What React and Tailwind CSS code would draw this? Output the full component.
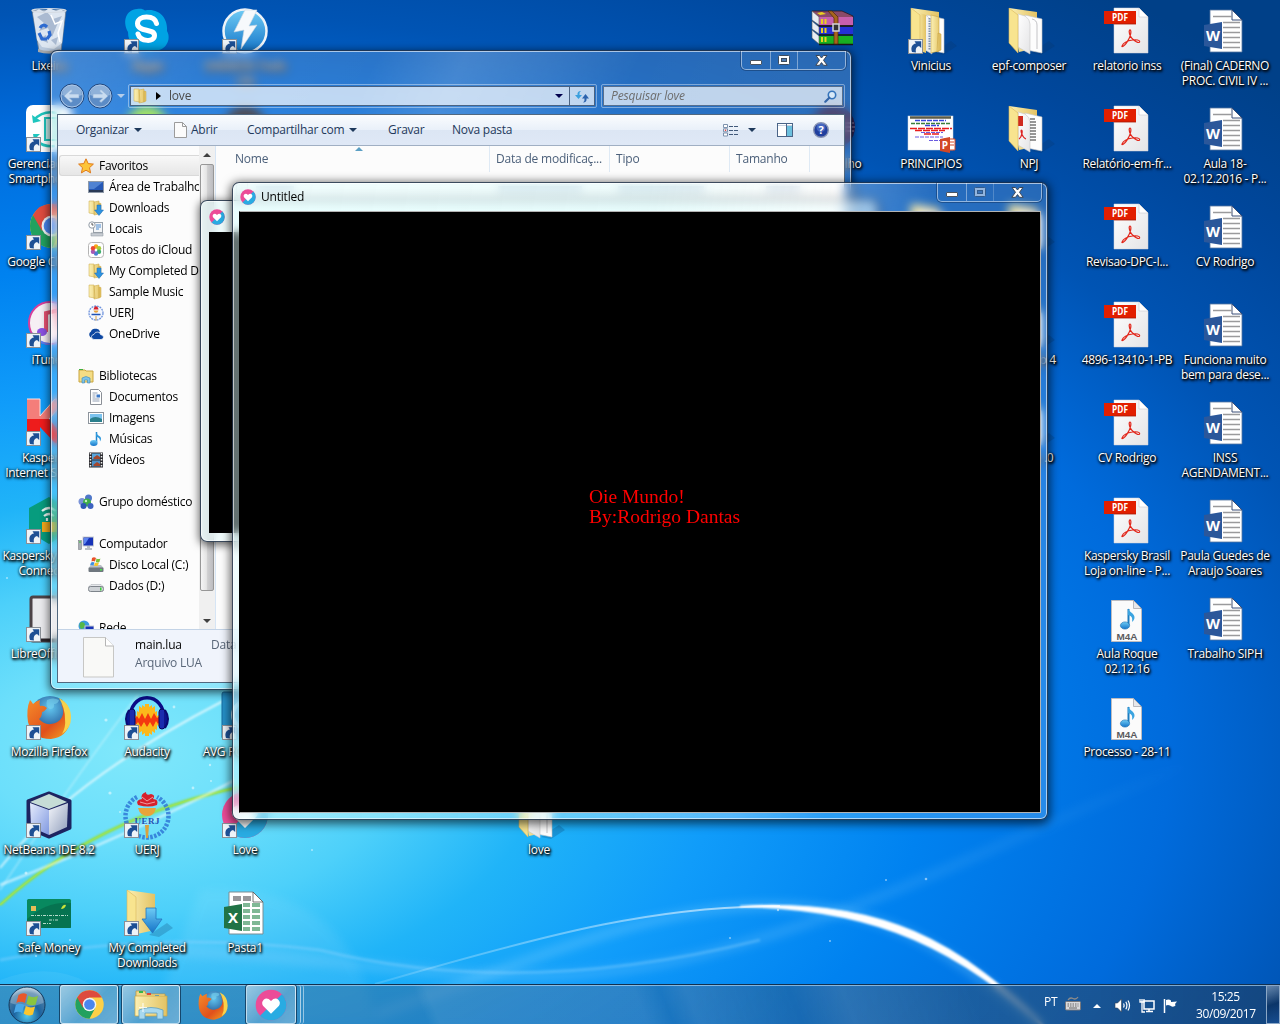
import React from "react";

const UI = "font-['Open_Sans','Noto_Sans',sans-serif]";

/* ---------- shared drawings ---------- */

function Arrow() {
  return (
    <g>
      <rect x="1.5" y="32.5" width="14" height="14" fill="#eef3f8" stroke="#8a8f96" />
      <path d="M5 45c-1.6-4.6.2-7.800 4-8.400L7.500 34.300h6.700v6.700l-2.200-2c-2.600.6-3.800 2.800-3.100 6.500z" fill="#1d4f94" />
    </g>
  );
}

function Svg({ children, s = 48 }) {
  return (
    <svg width={s} height={s} viewBox="0 0 48 48" className="block shrink-0 overflow-visible">
      {children}
    </svg>
  );
}

const Defs = () => (
  <svg width="0" height="0" className="absolute">
    <defs>
      <linearGradient id="fold" x1="0" x2="1"><stop offset="0" stopColor="#fbf0b4" /><stop offset="1" stopColor="#e3c263" /></linearGradient>
      <linearGradient id="page" x1="0" y1="0" x2="1" y2="1"><stop offset="0" stopColor="#ffffff" /><stop offset="1" stopColor="#e4e4e6" /></linearGradient>
      <linearGradient id="blue" x1="0" y1="0" x2="0" y2="1"><stop offset="0" stopColor="#6ecbf5" /><stop offset="1" stopColor="#1474c8" /></linearGradient>
      <linearGradient id="silver" x1="0" y1="0" x2="1" y2="1"><stop offset="0" stopColor="#f4f6fb" /><stop offset="1" stopColor="#8f9dbb" /></linearGradient>
      <linearGradient id="cubeL" x1="0" y1="0" x2="1" y2="1"><stop offset="0" stopColor="#e6ecfc" /><stop offset="1" stopColor="#7f98e0" /></linearGradient>
      <radialGradient id="orb" cx=".5" cy=".8" r=".8"><stop offset="0" stopColor="#4fc9ee" /><stop offset=".45" stopColor="#1c639f" /><stop offset=".8" stopColor="#4c7ea5" /><stop offset="1" stopColor="#c3d9e8" /></radialGradient>
      <radialGradient id="globe" cx=".5" cy=".3" r=".7"><stop offset="0" stopColor="#62c6ef" /><stop offset="1" stopColor="#143a80" /></radialGradient>
      <linearGradient id="fox" x1="0" y1="0" x2="1" y2="1"><stop offset="0" stopColor="#f58b2a" /><stop offset=".6" stopColor="#e0501c" /><stop offset="1" stopColor="#f5a623" /></linearGradient>
    </defs>
  </svg>
);

const Pdf = () => (
  <Svg>
    <path d="M11 1h25l9 9v36H11z" fill="url(#page)" stroke="#d0d3d8" strokeWidth=".5" />
    <path d="M36 1l9 9h-9z" fill="#fff" stroke="#c9cbd0" strokeWidth=".6" />
    <rect x="1" y="4" width="32" height="13" fill="#e21f00" />
    <path d="M33 17l-22 0" stroke="#a51a05" strokeWidth=".8" />
    <text x="9" y="14" fontSize="10" fontWeight="700" fill="#fff" fontFamily="Open Sans" textLength="16" lengthAdjust="spacingAndGlyphs">PDF</text>
    <path d="M19 39c1.500-3.600 6-5.400 10.500-6 4-.6 7.400.1 7.200 1.700-.2 1.700-3.400.5-5.700-1.400-3-2.500-4.700-5.700-4.800-8.600-.1-2.300 1.600-2.300 1.700 0 .1 3.200-2.300 8-4.400 11.200C21.500 39 18.300 40.500 19 39z" fill="none" stroke="#e2261a" strokeWidth="1.200" />
  </Svg>
);

const Word = () => (
  <Svg>
    <path d="M9 3h22l10 10v32H9z" fill="#fff" stroke="#54739f" strokeWidth=".8" />
    <path d="M31 3v10h10z" fill="#fff" stroke="#3b4f78" strokeWidth="1" />
    <path d="M12 9.500h19M22 15.500h17M22 20.500h17M22 25.500h17M22 30.500h17M22 35.500h17M22 40.500h17" stroke="#9a9a9c" strokeWidth="1.600" />
    <path d="M3 18l18-3v27L3 39z" fill="#2b579a" />
    <text x="5" y="33.500" fontSize="14" fontWeight="700" fill="#fff" fontFamily="Open Sans" textLength="14" lengthAdjust="spacingAndGlyphs">W</text>
  </Svg>
);

const Excel = () => (
  <Svg>
    <path d="M8 3h24l10 10v32H8z" fill="#fff" stroke="#7b8d94" strokeWidth="1" />
    <path d="M32 3v10h10z" fill="#fff" stroke="#555" strokeWidth=".8" />
    <path d="M12 7h8v5h-8zM22 7h8v5h-8z" fill="#97979a" />
    <path d="M22 14h7v4h-7zM31 14h8v4h-8zM22 20h7v4h-7zM31 20h8v4h-8zM22 26h7v4h-7zM31 26h8v4h-8zM22 32h7v4h-7zM31 32h8v4h-8zM22 38h7v4h-7zM31 38h8v4h-8z" fill="#7fb895" />
    <path d="M3 18l18-3v27L3 39z" fill="#217346" />
    <text x="12" y="34" textAnchor="middle" fontSize="15" fontWeight="700" fill="#fff" fontFamily="Open Sans">X</text>
  </Svg>
);

const M4a = () => (
  <Svg>
    <g transform="translate(0 2)">
      <path d="M8.500 3.500h22l8 9v32h-30z" fill="#fbfbfb" stroke="#bcbcc0" />
      <path d="M30.500 3.500v8h8z" fill="#e7e7ea" stroke="#a9a9ae" strokeWidth=".8" />
      <path d="M25.500 12v16" stroke="#1b7cc0" strokeWidth="2" />
      <path d="M25 11c.5 4.500 7 5 6.500 10-.3 2-1.500 3-2.500 4 1-5-1-6-4-7z" fill="#3ba4e0" />
      <ellipse cx="22" cy="28.500" rx="4.600" ry="3.600" fill="url(#blue)" stroke="#1a6dae" strokeWidth=".6" />
      <text x="13.500" y="42.500" fontSize="8.500" fontWeight="700" fill="#5b5b5e" fontFamily="Liberation Sans" textLength="21" lengthAdjust="spacingAndGlyphs">M4A</text>
    </g>
  </Svg>
);

const FolderDocs = ({ pdf, tabs, arrow, down, s }) => (
  <Svg s={s}>
    <path d="M26 46l18-12 6 5-14 9z" fill="#08315f" opacity=".22" />
    <path d="M4 1l28 4v36l-18 4z" fill="url(#fold)" />
    {!down && (
      <g>
        <path d="M20 8l17 4v34l-15-3z" fill="#fdfdfd" stroke="#c5c5c5" strokeWidth=".6" />
        <path d="M13 7l7 2q5 3 5 8v30l-12-7z" fill="url(#page)" stroke="#c8c8c8" strokeWidth=".6" />
        {!pdf && !tabs && <path d="M27 12q5 1 5 6v24" fill="none" stroke="#b4b4b8" strokeWidth=".8" />}
        {pdf && <path d="M13 11h5v10h-5z" fill="#cf2a1e" />}
        {pdf && <path d="M25 14h5M25 17h6M25 20h6M25 23h6M25 26h6M25 29h6M25 32h6M25 35h6" stroke="#333" strokeWidth="1.100" />}
        {pdf && <path d="M14 34c3-2 4-9 2.500-9s1 8 4.500 9" fill="none" stroke="#d22" strokeWidth="1.200" />}
        {tabs && <path d="M24 8l8 2v34l-8 2zM31 26l3 1v16l-4 2z" fill="url(#fold)" stroke="#c29b36" strokeWidth=".5" />}
        {tabs && <path d="M22.500 11v32" stroke="#8295ab" strokeWidth="2" strokeDasharray="1.500 1" />}
        {tabs && <path d="M10 5l9 3v38l-6-2z" fill="url(#fold)" />}
      </g>
    )}
    <path d="M4 1l9 7v38L4 36z" fill="#f8e48f" stroke="#d8b65a" strokeWidth=".6" />
    {down && <path d="M23 19h10v11h6L29.500 44 19 30h4z" fill="url(#blue)" stroke="#2474bd" strokeWidth=".8" />}
    {arrow && <Arrow />}
  </Svg>
);

const Bin = () => (
  <Svg>
    <path d="M7 3h34l-5 41q-12 4-22 0z" fill="#b9c9dd" stroke="#6f7f91" strokeWidth=".8" />
    <path d="M8 6l6-4 5 3 5-4 7 3 5-2 4 4-3 30-8 6-12-2-5-7z" fill="#dde6f1" />
    <path d="M12 10l7 6-5 8 9-3 4 9 5-12 5-9-9 3-6-7zM14 32l7-4 2 8zM26 33l7-3-2 8z" fill="#98abc5" opacity=".75" />
    <path d="M15 21q3-5 7-1M14 26l3 6 5 0M24 24l1 4-3 4" fill="none" stroke="#2e6bd0" strokeWidth="3.200" />
    <path d="M26 8l4 9 7-3-4 12 2 9" fill="none" stroke="#fff" strokeWidth="1.500" />
    <ellipse cx="24" cy="3.500" rx="17" ry="2" fill="none" stroke="#d5dce4" strokeWidth="1.200" />
    <path d="M13 42q11 4 22 0v3q-11 3-22 0z" fill="#a5a8ac" />
  </Svg>
);

const Skype = () => (
  <Svg>
    <path d="M14 2c4-.5 6 0 8 1.500C36 1 45 11 44 24c5 9-2 20-12 19.500C17 48 5 39 5 25-1 14 3 3 14 2z" fill="#00a3e4" />
    <path d="M33.500 16.500c-1-5-5.500-6.500-10-6.500-5 0-9 2.500-9 6.500 0 9 17 4.500 17 12 0 7-14 6.500-16.500-1.500" fill="none" stroke="#fff" strokeWidth="5" strokeLinecap="round" />
    <Arrow />
  </Svg>
);

const Daemon = () => (
  <Svg>
    <circle cx="24" cy="24" r="21.500" fill="url(#blue)" stroke="#eef3f8" strokeWidth="2.500" />
    <path d="M24 3h12L28 19l8-1-16 24 3-19-10 2z" fill="#f6f9fc" stroke="#ccd6e0" strokeWidth=".6" />
    <Arrow />
  </Svg>
);

const Phone = () => (
  <Svg>
    <rect x="1" y="0" width="46" height="47" rx="7" fill="#fff" />
    <path d="M9 15Q18 5 32 8" fill="none" stroke="#1fc6be" strokeWidth="2.500" />
    <path d="M7 10l1 8 8-2z" fill="#1fc6be" />
    <path d="M12 36q6 6 18 5" fill="none" stroke="#1fc6be" strokeWidth="2.500" />
    <path d="M8 29h7l-6 6z" fill="#1fc6be" />
    <rect x="20" y="13" width="14" height="22" fill="#c9efed" stroke="#1fc6be" strokeWidth="2" />
    <Arrow />
  </Svg>
);

function ChromeBody() {
  return (
    <g>
      <circle cx="24" cy="24" r="22" fill="#fcd047" />
      <path d="M24 24L4.950 13A22 22 0 0 0 24 46l9-17z" fill="#22a15f" />
      <path d="M24 13h19.200a22 22 0 0 0-38.300 0L14 29z" fill="#dd4b3e" />
      <circle cx="24" cy="24" r="10.500" fill="#f3f5f7" />
      <circle cx="24" cy="24" r="8.300" fill="#4a86ee" />
    </g>
  );
}
const Chrome = () => <Svg><g transform="translate(3 -1)"><ChromeBody /></g><Arrow /></Svg>;

const ITunes = () => (
  <Svg>
    <circle cx="25" cy="22" r="21" fill="#f6eff4" stroke="#d73f9b" strokeWidth="2" />
    <path d="M7 32A21 21 0 0 0 25 43" fill="none" stroke="#5b7df0" strokeWidth="2.200" />
    <path d="M21 31V12l14-3v19" fill="none" stroke="#e85072" strokeWidth="4" />
    <ellipse cx="17" cy="31" rx="5" ry="4" fill="#8a4fe0" />
    <Arrow />
  </Svg>
);

const Kasper = () => (
  <Svg>
    <path d="M2 0h13v17L30 0h12L24 20l20 24H30L15 28v17H2z" fill="#ee1c1c" />
    <path d="M2 0h13v17L30 0h12L24 20H2z" fill="#f47e7a" />
    <path d="M2 0h13v17L30 0h12L24 20" fill="none" stroke="#fbe0df" />
    <Arrow />
  </Svg>
);

const KasperConn = () => (
  <Svg>
    <path d="M24 0l20 11v24L24 47 4 35V11z" fill="#079c7e" />
    <path d="M17 14q7-6 14 0M19 19q5-4 10 0M22 24v-3" fill="none" stroke="#e8f7f3" strokeWidth="2.200" />
    <rect x="17" y="25" width="15" height="10" fill="#f2a81d" />
    <Arrow />
  </Svg>
);

const Libre = () => (
  <Svg>
    <rect x="6" y="2" width="38" height="44" rx="2" fill="#e9e9ec" stroke="#4c4347" strokeWidth="3" />
    <path d="M7 45h36" stroke="#2d262a" strokeWidth="3" />
    <Arrow />
  </Svg>
);

function FoxBody() {
  return (
    <g>
      <circle cx="25" cy="23" r="20" fill="url(#globe)" />
      <path d="M22 7q6-3 12 0-1 4-5 4 1 5-4 5-5-2-3-9z" fill="#7ad2ef" opacity=".6" />
      <path d="M5 7q2 2 3 4 3-3 7-4-1 3 0 6 4-1 7 2-3 4-5 4 0 5-3 7 5 6 12 5 8-1 11-7 3-6-1-13 10 6 9 18-3 15-19 17Q7 46 3 29 1 16 5 7z" fill="url(#fox)" />
      <path d="M34 5q12 6 12 20 0 10-9 16 4-7 3-15 0-11-6-21z" fill="#f9d24a" />
    </g>
  );
}
const Firefox = () => <Svg><FoxBody /><Arrow /></Svg>;

const Audacity = () => (
  <Svg>
    <path d="M7 28C5 -3 43 -3 41 28" fill="none" stroke="#0b0b86" strokeWidth="3.500" />
    <path d="M12 33V22l2 1v-5l2 1v-6l3 2v-3l3 2v-3h4v3l3-2v3l3-2v6l2-1v5l2-1v11l-2-1v5l-2-1v4l-3-2v4l-3-2v3h-4v-3l-3 2v-4l-3 2v-5l-2 1v-6z" fill="#fcb81b" />
    <path d="M11 27l3-4 2 3 3-6 3 6 3-6 3 6 3-6 3 5 3-2 1 4-3 4-2-3-3 6-3-5-3 5-3-5-3 5-3-5-2 3z" fill="#f4380f" />
    <rect x="6" y="16" width="6" height="20" rx="3" fill="#1b2cae" stroke="#05055e" />
    <rect x="36" y="16" width="6" height="20" rx="3" fill="#1b2cae" stroke="#05055e" />
    <path d="M6 17q-6 9 0 18M42 17q6 9 0 18" fill="#0a1494" stroke="#0a0a72" strokeWidth="2" />
    <Arrow />
  </Svg>
);

const Avg = () => <Svg><rect x="1" y="-1" width="46" height="47" rx="2" fill="#2590c8" stroke="#176b9e" /><circle cx="26" cy="22" r="14" fill="none" stroke="#cdeaf8" strokeWidth="4" /><Arrow /></Svg>;

const NetBeans = () => (
  <Svg>
    <path d="M24 2l21 8v27L24 46 3 37V10z" fill="#1d2460" stroke="#1d2460" strokeWidth="3" strokeLinejoin="round" />
    <path d="M24 3l18 8-18 7-19-7z" fill="#c6dcd6" />
    <path d="M5 12l19 7v25L6 36z" fill="url(#cubeL)" />
    <path d="M43 12l-19 7v25l18-8z" fill="url(#silver)" />
    <Arrow />
  </Svg>
);

function UerjBody() {
  return (
    <g>
      <path d="M14 6A21.500 21.500 0 1 0 34 6" fill="none" stroke="#2f78d6" strokeWidth="4.500" strokeDasharray="2.600 1.400" opacity=".85" />
      <path d="M15 14q-3-5 4-6-2-5 4-7 0 4 5 2 5 1 2 5 6 0 4 6-8 3-19 0z" fill="#d6202c" />
      <path d="M19 6l5 4 6-4M17 11l7 2 8-2" fill="none" stroke="#fff" strokeWidth=".8" opacity=".7" />
      <path d="M15 17h18q-2 8-8 8-8 0-10-8z" fill="#e9a33a" />
      <path d="M22 34h4l-1 13h-2z" fill="#d9a23f" />
      <text x="11.500" y="33" fontSize="9" fontWeight="700" fill="#1f52b5" fontFamily="Liberation Serif" textLength="25">UERJ</text>
    </g>
  );
}
const Uerj = () => <Svg><UerjBody /><Arrow /></Svg>;

function LoveBody() {
  return (
    <g>
      <circle cx="24" cy="24" r="23" fill="#ec4c98" />
      <path d="M40.300 7.700A23 23 0 0 1 7.700 40.300z" fill="#29abe2" />
      <path d="M24 37L12 25q-3-5 1-9 5-4 11 2 6-6 11-2 4 4 1 9z" fill="#fff" />
    </g>
  );
}
const LoveShortcut = () => <Svg><LoveBody /><Arrow /></Svg>;
const LoveMark = ({ s = 16 }) => <Svg s={s}><LoveBody /></Svg>;

const Safe = () => (
  <Svg>
    <rect x="2" y="10" width="44" height="29" rx="1.500" fill="#08895f" />
    <path d="M2 30q20-18 44-16v25H2z" fill="#056a4a" opacity=".7" />
    <rect x="6" y="17" width="5" height="5" fill="#e6bd57" />
    <path d="M36 20q2-5 5-4-1 4-5 4z" fill="#c9e33a" />
    <path d="M6 26.500h37M24 31h10M18 34.500h8" stroke="#b4dccb" strokeWidth="1" strokeDasharray="3 1 1 1" />
    <Arrow />
  </Svg>
);

const Rar = () => (
  <Svg>
    <path d="M3 4h30l11 5v10H10z" fill="#8b4a68" stroke="#2a1620" strokeWidth=".8" />
    <path d="M10 10h34v8H10z" fill="#c75fae" /><path d="M10 20h34v7H10z" fill="#2430d6" /><path d="M10 29h34v8H10z" fill="#19b022" />
    <path d="M10 19h34M10 28h34M10 37.500h34" stroke="#181818" strokeWidth="1.500" />
    <path d="M3 4l7 6v8l-7-5zM3 14l7 6v7l-7-5zM3 23l7 6v8l-7-6z" fill="#e9edf3" stroke="#555" strokeWidth=".6" />
    <path d="M12 12h2v5h-2zM15.500 12h2v5h-2zM12 21h2v5h-2zM15.500 21h2v5h-2zM12 30h2v5h-2zM15.500 30h2v5h-2zM8 6l5-1 4 2-6 1z" fill="#e8d020" />
    <path d="M19 4h4l6 6v27h-4V11z" fill="#a8641e" stroke="#4d2a08" strokeWidth=".7" />
    <rect x="24" y="17" width="6" height="7" fill="#333" stroke="#d3d5d8" strokeWidth="1.500" />
  </Svg>
);

const Slides = () => (
  <Svg>
    <rect x="1" y="11" width="45" height="34" fill="#fff" stroke="#cfd6df" strokeWidth=".5" />
    <path d="M3 12.500h41" stroke="#5c5c48" strokeWidth="2.500" />
    <path d="M4 18.500h39" stroke="#3c7f3a" strokeWidth="1.500" strokeDasharray="4 1" /><path d="M8 15.500h31M18 20.500h14" stroke="#3846d8" strokeWidth="1.500" strokeDasharray="5 1" />
    <path d="M3 23.500h42M8 25.500h30M17 29h16" stroke="#e81c1c" strokeWidth="1.500" strokeDasharray="7 1" />
    <path d="M14 27.500h22M8 32h28M22 35.500h12" stroke="#6a5be0" strokeWidth="1" strokeDasharray="4 1" />
    <path d="M37 34h11v11H37z" fill="#fff" stroke="#d24726" /><path d="M42 37h5M42 40h5" stroke="#d24726" />
    <path d="M33 34l10-2v16l-10-2z" fill="#d24726" />
    <text x="38" y="44" textAnchor="middle" fontSize="10" fontWeight="700" fill="#fff" fontFamily="Open Sans">P</text>
  </Svg>
);

const Eclipse = () => <Svg><circle cx="24" cy="22" r="22" fill="#2c2255" /><path d="M3 18h42M2 22h44M3 26h42" stroke="#8f88b0" strokeWidth="1" /></Svg>;
const Green = () => <Svg><circle cx="24" cy="22" r="21" fill="#8fe03c" /></Svg>;
const Dark = () => <Svg><circle cx="24" cy="22" r="21" fill="#2b2730" /></Svg>;

/* ---------- desktop ---------- */

const icons = [
  [0, 0, Bin, ["Lixeira"]],
  [1, 0, Skype, ["Skype"]],
  [2, 0, Daemon, ["DAEMON Tools", "Lite"]],
  [0, 1, Phone, ["Gerenciador de", "Smartphones L"]],
  [1, 1, Green, []],
  [2, 1, Dark, []],
  [0, 2, Chrome, ["Google Chrome"]],
  [0, 3, ITunes, ["iTunes"]],
  [0, 4, Kasper, ["Kaspersky", "Internet Security"]],
  [0, 5, KasperConn, ["Kaspersky Secure", "Connection"]],
  [0, 6, Libre, ["LibreOffice 5.1"]],
  [0, 7, Firefox, ["Mozilla Firefox"]],
  [1, 7, Audacity, ["Audacity"]],
  [2, 7, Avg, ["AVG PC TuneUp"]],
  [0, 8, NetBeans, ["NetBeans IDE 8.2"]],
  [1, 8, Uerj, ["UERJ"]],
  [2, 8, LoveShortcut, ["Love"]],
  [5, 8, FolderDocs, ["love"]],
  [0, 9, Safe, ["Safe Money"]],
  [1, 9, () => <FolderDocs down arrow />, ["My Completed", "Downloads"]],
  [2, 9, Excel, ["Pasta1"]],
  [8, 0, Rar, []],
  [8, 1, Eclipse, ["O trabalho"]],
  [9, 0, () => <FolderDocs tabs arrow />, ["Vinicius"]],
  [10, 0, FolderDocs, ["epf-composer"]],
  [9, 1, Slides, ["PRINCIPIOS"]],
  [10, 1, () => <FolderDocs pdf />, ["NPJ"]],
  [10, 2, FolderDocs, []],
  [9, 2, FolderDocs, []],
  [10, 3, FolderDocs, ["Capitulo 4"]],
  [10, 4, FolderDocs, ["Versao .0"]],
  [11, 0, Pdf, ["relatorio inss"]],
  [11, 1, Pdf, ["Relatório-em-fr..."]],
  [11, 2, Pdf, ["Revisao-DPC-I..."]],
  [11, 3, Pdf, ["4896-13410-1-PB"]],
  [11, 4, Pdf, ["CV Rodrigo"]],
  [11, 5, Pdf, ["Kaspersky Brasil", "Loja on-line - P..."]],
  [11, 6, M4a, ["Aula Roque", "02.12.16"]],
  [11, 7, M4a, ["Processo - 28-11"]],
  [12, 0, Word, ["(Final) CADERNO", "PROC. CIVIL IV ..."]],
  [12, 1, Word, ["Aula 18-", "02.12.2016 - P..."]],
  [12, 2, Word, ["CV Rodrigo"]],
  [12, 3, Word, ["Funciona muito", "bem para dese..."]],
  [12, 4, Word, ["INSS", "AGENDAMENT..."]],
  [12, 5, Word, ["Paula Guedes de", "Araujo Soares"]],
  [12, 6, Word, ["Trabalho SIPH"]],
];

function DesktopIcon({ col, row, Icon, lines }) {
  return (
    <div
      className="absolute flex w-[98px] flex-col items-center"
      style={{ left: col * 98, top: row * 98 + 7 }}
    >
      <Icon />
      <div className="mt-[3px] flex flex-col items-center text-[12px] leading-[15px] tracking-[-0.3px] whitespace-nowrap text-white [text-shadow:1px_1px_2px_#000,1px_2px_3px_#000,0_0_3px_rgba(0,0,0,.9)]">
        {lines.map((l) => <span key={l}>{l}</span>)}
      </div>
    </div>
  );
}

const dots = [[106, 720, 1.6], [174, 707, 1.4], [210, 765, 1.2], [110, 793, 1.6], [211, 781, 1], [26, 873, 1.5], [193, 788, 1.4], [36, 956, 1], [120, 812, 1], [7, 578, 1], [926, 879, 1.3], [778, 910, 1.2], [730, 938, 1], [830, 941, 1], [70, 940, 1], [312, 850, 1], [886, 880, 1]];

function Wallpaper() {
  return (
    <svg className="absolute inset-0" width="1280" height="1024" viewBox="0 0 1280 1024">
      <defs>
        <radialGradient id="wp" gradientUnits="userSpaceOnUse" cx="0" cy="0" r="1600" gradientTransform="translate(130 750) scale(1 .6)">
          <stop offset="0" stopColor="#80e8fb" /><stop offset=".09" stopColor="#6cdffb" /><stop offset=".17" stopColor="#4dd0fa" />
          <stop offset=".26" stopColor="#20b4f8" /><stop offset=".37" stopColor="#109cfa" /><stop offset=".5" stopColor="#0082f0" />
          <stop offset=".65" stopColor="#006bdc" /><stop offset=".77" stopColor="#0054b4" /><stop offset=".89" stopColor="#00479c" /><stop offset="1" stopColor="#004088" />
        </radialGradient>
        <linearGradient id="arc" gradientUnits="userSpaceOnUse" x1="380" y1="0" x2="900" y2="0"><stop offset="0" stopColor="#fff" stopOpacity=".15" /><stop offset=".7" stopColor="#fff" stopOpacity=".6" /><stop offset="1" stopColor="#fff" /></linearGradient>
        <linearGradient id="haze" gradientUnits="userSpaceOnUse" x1="160" y1="0" x2="1200" y2="0"><stop offset="0" stopColor="#8fd4ff" /><stop offset=".6" stopColor="#8fd4ff" stopOpacity=".8" /><stop offset="1" stopColor="#8fd4ff" stopOpacity="0" /></linearGradient>
        <filter id="b1" x="-10%" y="-10%" width="120%" height="120%"><feGaussianBlur stdDeviation="1" /></filter>
        <filter id="b6" x="-10%" y="-30%" width="120%" height="160%"><feGaussianBlur stdDeviation="5" /></filter>
      </defs>
      <rect width="1280" height="1024" fill="url(#wp)" />
      <path d="M200 890Q350 880 376 1024H150z" fill="#fff" opacity=".07" filter="url(#b6)" />
      <path d="M0 980Q80 950 130 1024H0z" fill="#fff" opacity=".06" />
      <path d="M160 950C400 960 520 1000 700 955S1000 840 1200 760" fill="none" stroke="url(#haze)" strokeWidth="10" opacity=".28" filter="url(#b6)" />
      <path d="M0 960Q160 930 320 950Q520 1000 760 940" fill="none" stroke="url(#haze)" strokeWidth="3" opacity=".4" filter="url(#b1)" />
      <path d="M0 905Q95 818 240 787" fill="none" stroke="#8fe04a" strokeWidth="3" filter="url(#b1)" />
      <path d="M0 905Q95 818 240 787" fill="none" stroke="#9be35a" strokeWidth="1.500" opacity=".8" />
      <path d="M0 868Q70 780 225 700" fill="none" stroke="#fff" strokeWidth="2" opacity=".7" filter="url(#b1)" />
      <path d="M0 885Q130 835 235 780" fill="none" stroke="#fff" strokeWidth="2.500" opacity=".6" filter="url(#b1)" />
      <path d="M0 890Q80 770 138 695" fill="none" stroke="#fff" strokeWidth="1.500" opacity=".35" filter="url(#b1)" />
      <path d="M375 1015C560 950 660 903 780 906C900 908 960 960 1045 1030" fill="none" stroke="#7fd0ff" strokeWidth="9" opacity=".35" filter="url(#b6)" />
      <path d="M375 984C560 930 660 906 780 906" fill="none" stroke="url(#arc)" strokeWidth="2" />
      <path d="M740 906.500C880 898 960 940 1052 1034C960 950 880 908 740 906.500z" fill="#fff" stroke="#fff" strokeWidth="1.500" filter="url(#b1)" />
      {dots.map(([x, y, r]) => <circle key={`${x}-${y}`} cx={x} cy={y} r={r} fill="#fff" opacity=".5" />)}
    </svg>
  );
}

/* ---------- windows ---------- */

function CaptionButtons({ disabledMax }) {
  return (
    <div className="absolute top-0 right-[5px] flex h-[19px] w-[105px] rounded-b-[5px] border border-t-0 border-white/50 shadow-[0_0_0_1px_rgba(15,45,85,.45)]">
      <div className="flex w-[29px] items-end justify-center border-r border-white/40 pb-[4px]">
        <div className="h-[5px] w-[12px] rounded-[1px] border border-[#4a5563] bg-white" />
      </div>
      <div className={`flex w-[27px] items-center justify-center border-r border-white/40 ${disabledMax ? "opacity-50" : ""}`}>
        <svg width="12" height="10" viewBox="0 0 12 10"><rect x=".5" y=".5" width="11" height="9" rx="1" fill="#fff" stroke="#3e4c5e" /><rect x="3.500" y="3.500" width="5" height="3" fill="#4f7cb4" stroke="#3e4c5e" /></svg>
      </div>
      <div className="flex flex-1 items-center justify-center">
        <svg width="13" height="11" viewBox="0 0 13 11"><path d="M1 .5h3.500l2 2.500 2-2.500H12L8.500 5.300l3.700 5H8.500l-2-2.700-2 2.700H.8l3.700-5z" fill="#fff" stroke="#3e4754" /></svg>
      </div>
    </div>
  );
}

const Caret = () => <span className="inline-block h-0 w-0 border-x-[4px] border-t-[4px] border-x-transparent border-t-[#1e395b]" />;

function NavCircle({ flip }) {
  return (
    <svg width="26" height="26" viewBox="0 0 26 26" className={flip ? "-scale-x-100" : ""}>
      <circle cx="13" cy="13" r="12" fill="#5c8cc6" stroke="#23477c" />
      <circle cx="13" cy="13" r="11" fill="none" stroke="#c6daf0" strokeOpacity=".75" />
      <path d="M3 12a10 10 0 0 1 20 0q-10 4-20 0z" fill="#b9cfe9" opacity=".55" />
      <path d="M5 13l7-6.500 1.500 1.500-3 3h9.500v4h-9.500l3 3-1.500 1.500z" fill="#c9dcf0" stroke="#8fb0d6" strokeWidth=".6" />
    </svg>
  );
}

/* 16px navigation-pane icons */
const Small = ({ children }) => <svg width="16" height="16" viewBox="0 0 16 16" className="block shrink-0">{children}</svg>;
const smallFolder = <path d="M1 1h5l1 13-6-1zM6 2l5-1v13l-5 1zM11 3l2 .5V13l-2 1z" fill="url(#fold)" stroke="#c9a540" strokeWidth=".5" />;
const small = {
  star: <Small><path d="M8 .8l2.200 4.800 5.200.5-3.900 3.600 1.100 5.200L8 12.200 3.400 14.900l1.100-5.200L.6 6.100l5.200-.5z" fill="#fdc53a" stroke="#e07a1c" /></Small>,
  desk: <Small><rect x=".5" y="2.500" width="15" height="11" fill="#2457b5" stroke="#8e99a8" /><path d="M1 3h14L6 10H1z" fill="#6c9fe6" opacity=".6" /><path d="M1 12h14" stroke="#2b2f36" strokeWidth="1.500" /></Small>,
  down: <Small>{smallFolder}<path d="M9 5h4v5h2.500L11 15.500 6.500 10H9z" fill="#2d92e0" stroke="#1a6bb5" strokeWidth=".5" /></Small>,
  recent: <Small><rect x="5.500" y="1.500" width="9" height="10" fill="#f3f5f7" stroke="#9aa2ab" /><path d="M8 4h5M8 6h5M8 8h3" stroke="#4d8bd0" /><circle cx="4" cy="4" r="3.200" fill="#fff" stroke="#939ca6" /><path d="M4 2v2h1.500" stroke="#555" fill="none" /><path d="M3 12h12v3H3z" fill="#c8cdd3" stroke="#8b929a" strokeWidth=".5" /></Small>,
  photos: <Small><rect x=".5" y=".5" width="15" height="15" rx="3" fill="#fff" stroke="#b4b4b4" /><circle cx="8" cy="4.500" r="2.200" fill="#f7a81b" /><circle cx="11" cy="6.300" r="2.200" fill="#a5cc3a" /><circle cx="11" cy="9.800" r="2.200" fill="#3fae6b" /><circle cx="8" cy="11.500" r="2.200" fill="#4a7fd4" /><circle cx="5" cy="9.800" r="2.200" fill="#a759b4" /><circle cx="5" cy="6.300" r="2.200" fill="#ec4a35" /></Small>,
  folder: <Small>{smallFolder}</Small>,
  uerj: <Small><circle cx="8" cy="8" r="7" fill="#f4f7fd" stroke="#6f93dc" strokeWidth="1.300" strokeDasharray="2 .8" /><path d="M5.500 4.500Q6 1.500 8 1q2.500 1 2.500 3.500z" fill="#d6202c" /><path d="M5.500 5.500h5q-.5 2.300-2.500 2.300T5.500 5.500z" fill="#e9a33a" /><path d="M3.500 9.500h9" stroke="#1f52b5" strokeWidth="1.500" /><path d="M8 11v4.500" stroke="#d9a23f" /></Small>,
  cloud: <Small><path d="M4 12a3.500 3.500 0 0 1-1-6.500Q4 2 8 2.800q3-.3 4 2.700" fill="#0d47a1" /><path d="M6 13.500q-3-.3-2.500-3Q4 8.500 6 8.400 7 5.600 10 6q2.300.4 2.700 2.700 2.800.3 2.800 2.600-.3 2.200-2.500 2.200z" fill="#0d47a1" stroke="#fff" strokeWidth=".7" /></Small>,
  libs: <Small><path d="M1 2h6l1 1h7v11H1z" fill="#f4dd85" stroke="#c9a540" /><path d="M1 1.500h4" stroke="#3fae3f" /><path d="M4 15v-5q4-3 8 0v5h-2.500v-3h-3v3z" fill="#7cc4ea" stroke="#3b87b8" strokeWidth=".6" /></Small>,
  doc: <Small><path d="M2.500.5h8l3 3v12h-11z" fill="#fff" stroke="#8a8f96" /><path d="M4.500 4h5M4.500 6h3M4.500 8h3M4.500 10h7M4.500 12h7" stroke="#93a0b4" /><rect x="8.500" y="5.500" width="3.500" height="3" fill="#3b78c8" /></Small>,
  img: <Small><rect x=".5" y="2.500" width="15" height="11" fill="#fff" stroke="#8d949c" /><rect x="2" y="4" width="12" height="8" fill="#7cc3ef" /><path d="M2 9q5-4 12 0v3H2z" fill="#2a7f8c" /></Small>,
  music: <Small><path d="M8.500 1v10" stroke="#1f86cf" strokeWidth="1.500" /><path d="M8 1q1 3 4 4.500 2 2 0 5 .3-4-4-5z" fill="#2f99dd" /><ellipse cx="5.800" cy="12" rx="3.800" ry="3" fill="url(#blue)" /></Small>,
  video: <Small><rect x="1" y=".5" width="14" height="15" fill="#2c2c30" /><rect x="4" y="1.500" width="8" height="6" fill="#58a6dc" /><rect x="4" y="8.500" width="8" height="6" fill="#4a90c8" /><path d="M5 6l4-3 3 2v2H6zM5 13l4-3 3 2v2H6z" fill="#a4472c" /><path d="M2.500 1v14M13.500 1v14" stroke="#eee" strokeWidth="1.500" strokeDasharray="1.500 1.500" /></Small>,
  home: <Small><circle cx="10.500" cy="4" r="3.500" fill="#4f77c9" /><circle cx="4" cy="7.500" r="3.500" fill="#7a93d8" /><circle cx="9" cy="8.500" r="4" fill="#3fae49" /><circle cx="5.500" cy="12" r="3" fill="#2d57b5" /><circle cx="12.500" cy="12" r="3" fill="#3d63c0" /><circle cx="8" cy="7" r="1.200" fill="#c9f0c6" /></Small>,
  pc: <Small><rect x="5" y="1" width="10.500" height="9" fill="#1733b8" stroke="#c9cdd2" /><path d="M6 2h5l-4 6H6z" fill="#5d85f0" /><path d="M9 10h3v2h2v2H7v-2h2z" fill="#b9bec5" /><rect x=".5" y="4.500" width="3" height="9" fill="#a9aeb5" stroke="#70757c" strokeWidth=".5" /><path d="M1 6h2" stroke="#37c837" /></Small>,
  disk: <Small><path d="M3 8h10l2.500 3H.5z" fill="#b9bfc6" /><rect x=".5" y="10.500" width="15" height="4.500" rx="1" fill="#6f777f" /><path d="M12 12h2v1.500h-2z" fill="#4be34b" /><path d="M4 1q2-1.500 4 0l-1 3.500q-2-1-3.500 0z" fill="#e9512a" /><path d="M8.400 1.500q2 1 4 0l-1 3.500q-2 1-3.500 0z" fill="#7bbf3a" /><path d="M3 5.500q2-1 3.500 0l-1 3q-2-1-3.500 0z" fill="#3f8fe0" /><path d="M7 5.500q2 1 4 0l-1 3q-2 1-4 0z" fill="#f7c52c" /></Small>,
  drive: <Small><path d="M3 6.500h10l2.500 2.500H.5z" fill="#e6e8eb" stroke="#a6abb1" strokeWidth=".5" /><rect x=".5" y="8.500" width="15" height="5" rx="2" fill="#ced2d6" stroke="#7e848b" /><path d="M12 9.500h1.500v3H12z" fill="#39d339" /></Small>,
  net: <Small><circle cx="6" cy="6" r="5.500" fill="#3a9be0" /><path d="M3 2q4 0 4 3T3 9Q0 5 3 2z" fill="#55b848" /><rect x="7" y="6" width="9" height="7" fill="#1733b8" stroke="#c9cdd2" /></Small>,
};

const tree = [
  ["star", "Favoritos", 0], ["desk", "Área de Trabalho", 1], ["down", "Downloads", 1], ["recent", "Locais", 1],
  ["photos", "Fotos do iCloud", 1], ["down", "My Completed D", 1], ["folder", "Sample Music", 1], ["uerj", "UERJ", 1],
  ["cloud", "OneDrive", 1], null, ["libs", "Bibliotecas", 0], ["doc", "Documentos", 1], ["img", "Imagens", 1],
  ["music", "Músicas", 1], ["video", "Vídeos", 1], null, ["home", "Grupo doméstico", 0], null,
  ["pc", "Computador", 0], ["disk", "Disco Local (C:)", 1], ["drive", "Dados (D:)", 1], null, ["net", "Rede", 0],
];

const glass = "absolute rounded-[7px] border border-[#1b2c42]/85 backdrop-blur-[5px]";
const glassFrame = "bg-white/15 shadow-[inset_0_0_0_1px_rgba(255,255,255,.6),0_2px_9px_1px_rgba(0,0,0,.6)]";
const sheen = "bg-[linear-gradient(115deg,rgba(255,255,255,.14)_0,rgba(255,255,255,.04)_14%,rgba(255,255,255,.02)_30%,rgba(255,255,255,.14)_38%,rgba(255,255,255,.08)_46%,rgba(255,255,255,0)_54%,rgba(255,255,255,.06)_100%)]";

function Explorer() {
  return (
    <div className={`${glass} ${glassFrame} top-[50px] left-[50px] h-[640px] w-[802px]`}>
      <div className={`flex h-full flex-col rounded-[6px] px-[6px] pb-[6px] ${sheen}`}>
        <div className="flex h-[63px] shrink-0 items-start pt-[32px]">
          <div className="ml-[2px] flex h-[26px] items-center gap-[2px]">
            <NavCircle /><NavCircle flip />
            <span className="ml-[2px] h-0 w-0 border-x-[4px] border-t-[4px] border-x-transparent border-t-[#b4cdea]" />
          </div>
          <div className="mt-[1px] ml-[3px] flex h-[24px] w-[469px] rounded-[2px] border border-white/40 p-px">
            <div className="flex flex-1 items-center border border-[#2b4566]/80 bg-white/70 pl-[2px] text-[12px] tracking-[-0.2px] text-[#4b4b4b]">
              {small.folder}
              <span className="ml-[7px] h-0 w-0 border-y-[4px] border-l-[5px] border-y-transparent border-l-black" />
              <span className="ml-[8px] flex-1">love</span>
              <span className="mr-[6px] h-0 w-0 border-x-[4px] border-t-[4px] border-x-transparent border-t-[#00004d]" />
            </div>
            <div className="flex w-[25px] items-center justify-center border border-l-0 border-[#2b4566]/80 bg-white/70">
              <svg width="14" height="13" viewBox="0 0 14 13"><path d="M6 1Q4 2 4.500 5H7L3.500 9 0 5h2.500Q2 1 6 1z" fill="#3aa0de" /><path d="M8 12.500q2-1 1.500-4H7L10.500 4 14 8.500h-2.500q.5 4-3.500 4z" fill="#2b62ad" /></svg>
            </div>
          </div>
          <div className="mt-[1px] ml-[4px] flex h-[24px] w-[244px] rounded-[2px] border border-white/40 p-px">
            <div className="flex flex-1 items-center justify-between border border-[#2b4566]/70 bg-white/70 pr-[5px] pl-[7px] text-[12px] tracking-[-0.15px] text-[#6d6d6d] italic">
              Pesquisar love
              <svg width="13" height="13" viewBox="0 0 13 13"><circle cx="8" cy="5" r="3.700" fill="#d8e9f8" stroke="#3574bb" strokeWidth="1.600" /><path d="M5.300 7.700L1.300 11.700" stroke="#3566a8" strokeWidth="2.200" strokeLinecap="round" /></svg>
            </div>
          </div>
        </div>

        <div className="flex min-h-0 flex-1 flex-col overflow-hidden border border-[#26425f]/80 bg-[#fcfcfc]">
          <div className="flex h-[31px] shrink-0 items-center border-b border-[#a0afc3] bg-[linear-gradient(#fafcfe_0,#e9f0f9_50%,#dce6f4_51%,#dfe8f6_100%)] text-[12px] tracking-[-0.25px] whitespace-nowrap text-[#1e395b]">
            <span className="ml-[18px] flex w-[98px] items-center gap-[5px]">Organizar <Caret /></span>
            <svg width="13" height="16" viewBox="0 0 13 16"><path d="M.5.5h8l4 4v11H.5z" fill="#fbfbfb" stroke="#9b9b9b" /><path d="M8.500.5v4h4" fill="none" stroke="#9b9b9b" /></svg>
            <span className="ml-[4px] w-[56px]">Abrir</span>
            <span className="flex w-[141px] items-center gap-[5px]">Compartilhar com <Caret /></span>
            <span className="w-[64px]">Gravar</span>
            <span className="flex-1">Nova pasta</span>
            <svg width="15" height="13" viewBox="0 0 15 13"><path d="M.5.5h4v3h-4zM.5 4.800h4v3h-4zM.5 9h4v3h-4z" fill="#fff" stroke="#7187a5" strokeWidth=".9" /><path d="M6 2.500h4M11 2.500h4M6 6.500h4M11 6.500h4M6 10.500h4M11 10.500h4" stroke="#41597a" /><circle cx="2.500" cy="6.300" r=".8" fill="#d33" /></svg>
            <span className="mr-[21px] ml-[10px] flex"><Caret /></span>
            <svg width="16" height="14" viewBox="0 0 16 14"><rect x=".5" y=".5" width="15" height="13" fill="#fff" stroke="#4a6487" /><path d="M1 2.500h14" stroke="#c5d1e0" /><rect x="10" y="3" width="5" height="10" fill="#6cc0de" /><path d="M9.500 1v12" stroke="#4a6487" /></svg>
            <svg className="mr-[15px] ml-[20px]" width="16" height="16" viewBox="0 0 16 16"><circle cx="8" cy="8" r="7.300" fill="#203f9e" stroke="#8793b3" strokeWidth="1.400" /><circle cx="8" cy="5.500" r="4.500" fill="#6c8ee0" opacity=".5" /><text x="8" y="12" textAnchor="middle" fontSize="11" fontWeight="700" fill="#fff" fontFamily="Open Sans">?</text></svg>
          </div>

          <div className="flex min-h-0 flex-1">
            <div className="w-[141px] shrink-0 overflow-hidden pt-[9px] text-[12px] tracking-[-0.25px] whitespace-nowrap text-black">
              {tree.map((n, i) =>
                n ? (
                  <div key={i} className={`flex h-[21px] items-center gap-[5px] ${n[2] ? "pl-[30px]" : i === 0 ? "ml-[1px] rounded-l-[3px] border border-r-0 border-[#d9d9d9] bg-[linear-gradient(#f8f8f8,#e6e6e6)] pl-[18px]" : "pl-[20px]"}`}>
                    {small[n[0]]}<span>{n[1]}</span>
                  </div>
                ) : <div key={i} className="h-[21px]" />
              )}
            </div>
            <div className="flex w-[16px] shrink-0 flex-col items-center bg-[#f0f0f0] pt-[7px] pb-[6px]">
              <span className="h-0 w-0 border-x-[4px] border-b-[4px] border-x-transparent border-b-[#404040]" />
              <div className="mt-[7px] h-[427px] w-[14px] rounded-[2px] border border-[#979797] bg-[linear-gradient(90deg,#f5f5f5_0,#e5e5e5_45%,#cfcfd0_55%,#bcbcc0)]" />
              <span className="mt-auto h-0 w-0 border-x-[4px] border-t-[4px] border-x-transparent border-t-[#404040]" />
            </div>
            <div className="relative flex-1 border-l border-[#d6e5f5] text-[12px] tracking-[-0.2px] text-[#4c607a]">
              <span className="absolute top-[1px] left-[139px] h-0 w-0 border-x-[4px] border-b-[4px] border-x-transparent border-b-[#5b9fc4]" />
              <div className="flex h-[26px] items-center whitespace-nowrap">
                <span className="w-[273px] pl-[19px]">Nome</span>
                <span className="flex h-full w-[120px] items-center border-l border-[#dfeaf5] pl-[6px]">Data de modificaç...</span>
                <span className="flex h-full w-[120px] items-center border-l border-[#dfeaf5] pl-[6px]">Tipo</span>
                <span className="flex h-full w-[81px] items-center border-x border-[#dfeaf5] pl-[6px]">Tamanho</span>
              </div>
              <div className="mt-[9px] flex h-[16px] items-center pl-[20px]">
                <div className="h-[14px] w-[12px] border border-gray-300" />
                <div className="ml-[8px] h-[6px] w-[38px] bg-slate-300" />
                <div className="ml-[204px] h-[6px] w-[84px] bg-slate-300" />
                <div className="ml-[36px] h-[6px] w-[86px] bg-slate-300" />
                <div className="ml-[62px] h-[6px] w-[34px] bg-slate-300" />
              </div>
            </div>
          </div>

          <div className="flex h-[53px] shrink-0 items-start border-t border-[#c3d3e6] bg-[#f0f4fc] text-[12px] tracking-[-0.2px]">
            <svg className="mt-[7px] ml-[25px]" width="32" height="41" viewBox="0 0 32 41"><path d="M.5.500h22l8 8.500v31H.5z" fill="#f9f9f7" stroke="#c7c7c5" /><path d="M22.500.500v8.500h8" fill="#fff" stroke="#b5b5b5" /></svg>
            <div className="mt-[6px] ml-[20px] w-[76px] leading-[18px] whitespace-nowrap">
              <div className="text-black">main.lua</div>
              <div className="text-[#5a6779]">Arquivo LUA</div>
            </div>
            <div className="mt-[6px] leading-[18px] whitespace-nowrap text-[#5a6779]">Data</div>
          </div>
        </div>
      </div>
      <CaptionButtons />
    </div>
  );
}

function BackWindow() {
  return (
    <div className={`${glass} top-[200px] left-[200px] flex h-[342px] w-[677px] flex-col bg-[#e8ffff]/50 px-[8px] pb-[8px] shadow-[inset_0_0_0_1px_rgba(255,255,255,.6),0_2px_9px_1px_rgba(0,0,0,.6)]`}>
      <div className="flex h-[31px] shrink-0 items-center"><LoveMark /></div>
      <div className="flex-1 bg-black" />
    </div>
  );
}

function LoveWindow() {
  return (
    <div className={`${glass} top-[182px] left-[232px] flex h-[638px] w-[816px] flex-col bg-[linear-gradient(100deg,rgba(225,255,255,.45)_0,rgba(215,250,250,.4)_45%,rgba(255,255,255,.3)_66%,rgba(255,255,255,.15)_76%)] px-[6px] pb-[6px] shadow-[inset_0_0_0_1px_rgba(255,255,255,.6),0_2px_10px_2px_rgba(0,0,0,.6)]`}>
      <div className="flex h-[28px] shrink-0 items-center pl-[1px]">
        <LoveMark />
        <span className="ml-[5px] text-[12px] tracking-[-0.2px] text-black">Untitled</span>
      </div>
      <div className="flex-1 border border-white/70 border-l-black bg-black pt-[275px] pl-[349px] font-['Liberation_Serif',serif] text-[19.500px] leading-[20px] text-[#ff0000]">
        <div>Oie Mundo!</div>
        <div>By:Rodrigo Dantas</div>
      </div>
      <CaptionButtons disabledMax />
    </div>
  );
}

/* ---------- taskbar ---------- */

const taskBtn = "flex h-[39px] items-center justify-center rounded-[3px] border border-white/60 bg-[linear-gradient(135deg,rgba(255,255,255,.5),rgba(255,255,255,.18)_55%,rgba(255,255,255,.28))] shadow-[0_0_0_1px_rgba(10,40,70,.7)]";

function Taskbar() {
  return (
    <div className="absolute inset-x-0 bottom-0 flex h-[40px] items-stretch border-t border-[#12304f] bg-[linear-gradient(90deg,rgba(60,110,150,.5),rgba(45,95,145,.5)_50%,rgba(40,80,120,.65)_80%,rgba(25,65,110,.75))] backdrop-blur-[3px] shadow-[inset_0_1px_0_rgba(170,210,240,.7)]">
      <div className="absolute inset-0 bg-[linear-gradient(68deg,transparent_33%,rgba(255,255,255,.07)_34%,rgba(255,255,255,.07)_50%,transparent_52%,rgba(255,255,255,.07)_54%,transparent_62%,rgba(255,255,255,.08)_66%,transparent_76%)]" />
      <div className="relative flex w-[60px] items-center pl-[8px]">
        <svg width="38" height="38" viewBox="0 0 38 38">
          <circle cx="19" cy="19" r="18" fill="url(#orb)" stroke="#15395c" />
          <path d="M2.500 17a16.500 15 0 0 1 33 0q-16 7-33 0z" fill="#fff" opacity=".25" />
          <path d="M10.500 9q4.500-3 8.500-.5l-2.200 8.500q-4-2.500-8.500 0z" fill="#e8572a" />
          <path d="M20.500 9.500q4 3 9.500.5l-2.300 8.500q-4.200 2-9.400-.7z" fill="#8ac53f" />
          <path d="M7.800 19q4.300-2.500 8.500 0l-2.200 8q-3.700-2.500-8.200 0z" fill="#48a7e8" />
          <path d="M17.800 20q4.200 2.500 9.300.5l-2.200 8q-4.200 2.300-9.200-.8z" fill="#fcc62e" />
        </svg>
      </div>
      <div className={`${taskBtn} relative w-[58px]`}><Svg s={31}><ChromeBody /></Svg></div>
      <div className={`${taskBtn} relative ml-[4px] w-[58px]`}>
        <svg width="34" height="31" viewBox="0 0 34 31">
          <path d="M2 4V2h9l1 3h19v20H2z" fill="#f0d98a" stroke="#b9953c" strokeWidth=".7" />
          <path d="M5 2h4v2H5z" fill="#37b54a" /><path d="M13 4h4v2h-4z" fill="#e0453a" /><path d="M21 6h4v2h-4z" fill="#3f9fe0" />
          <path d="M1 7h32v20H1z" fill="url(#fold)" stroke="#c9a540" strokeWidth=".7" />
          <path d="M5 30V21q12-5 24 0v9h-6v-6H11v6z" fill="#a7d8ef" stroke="#5a9fc5" strokeWidth=".8" />
          <path d="M9 14v9M5 18.500h8" stroke="#fff" strokeWidth="1.200" opacity=".8" />
        </svg>
      </div>
      <div className="relative flex w-[66px] items-center justify-center"><Svg s={32}><FoxBody /></Svg></div>
      <div className={`${taskBtn} relative w-[50px]`}><Svg s={32}><LoveBody /></Svg></div>
      <div className="relative ml-[1px] w-[4px] rounded-r-[3px] border-r border-white/60" />
      <div className="relative w-[3px] rounded-r-[3px] border-r border-white/50" />
      <div className="relative ml-auto flex items-center text-[12px] tracking-[-0.3px] text-white">
        <span className="mb-[6px] w-[21px]">PT</span>
        <svg className="mb-[3px]" width="16" height="15" viewBox="0 0 16 15"><path d="M3 4q2-3 5-1.500t5-1.500" fill="none" stroke="#8b8b8b" strokeWidth="1.300" /><rect x=".5" y="5.500" width="15" height="8.500" rx="1" fill="#d9d9dc" stroke="#77777c" /><path d="M2.500 8h11M2.500 10h11" stroke="#666" strokeDasharray="1.500 1" /><path d="M4 12h8" stroke="#666" /></svg>
        <span className="mt-[3px] ml-[12px] h-0 w-0 border-x-[4px] border-b-[4px] border-x-transparent border-b-white" />
        <svg className="mt-[2px] ml-[13px]" width="17" height="15" viewBox="0 0 17 15"><path d="M1 5h2.500L7.500 1v13L3.500 10H1z" fill="#fff" stroke="#333f50" strokeWidth=".6" /><path d="M9.500 5.500q1.200 2 0 4M11.800 3.800q2.200 3.700 0 7.400M14 2.500q3 5 0 10" fill="none" stroke="#fff" strokeWidth="1.200" /></svg>
        <svg className="mt-[2px] ml-[8px]" width="16" height="15" viewBox="0 0 16 15"><path d="M5 3h10v8H5zM7 13.500h7M10 11v2" fill="none" stroke="#fff" strokeWidth="1.500" /><path d="M1 1v3h4V1M3 4v10h3M3 1v3" fill="none" stroke="#fff" strokeWidth="1.300" /></svg>
        <svg className="mt-[2px] ml-[8px]" width="15" height="15" viewBox="0 0 15 15"><path d="M1.500 1v14" stroke="#fff" strokeWidth="1.500" /><path d="M3 2q3-1 5 .5V4q3-.5 6-.5L12 6q1 1.500 0 2-3 1.500-5-.5-2-.8-4 0z" fill="#fff" /></svg>
        <div className="ml-[18px] w-[59px] text-center leading-[17px] tracking-[-0.4px] whitespace-nowrap"><div>15:25</div><div>30/09/2017</div></div>
      </div>
      <div className="relative ml-[11px] w-[14px] border border-[#8ba7c6] bg-[linear-gradient(160deg,rgba(255,255,255,.35),rgba(0,30,70,.4)_50%,rgba(30,90,170,.4))]" />
    </div>
  );
}

export default function App() {
  return (
    <div className={`relative h-[1024px] w-[1280px] overflow-hidden ${UI}`}>
      <Defs />
      <Wallpaper />
      {icons.map(([c, r, I, l]) => <DesktopIcon key={`${c}-${r}`} col={c} row={r} Icon={I} lines={l} />)}
      <Explorer />
      <BackWindow />
      <LoveWindow />
      <Taskbar />
    </div>
  );
}
